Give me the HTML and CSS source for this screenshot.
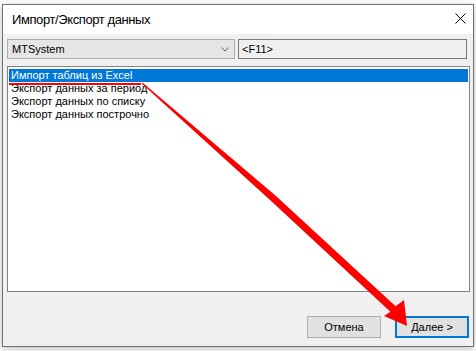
FILE: index.html
```html
<!DOCTYPE html>
<html lang="ru">
<head>
  <meta charset="UTF-8" />
  <title>Импорт/Экспорт данных</title>
  <link rel="stylesheet" href="styles.css">
</head>
<body>

  <div class="dialog">
    <div class="titlebar">
      <span class="title">Импорт/Экспорт данных</span>
      <svg class="close" width="11" height="11" viewBox="0 0 11 11">
        <path d="M0.5 0.5 L10.5 10.5 M10.5 0.5 L0.5 10.5" stroke="#000" stroke-width="1" fill="none" />
      </svg>
    </div>

    <div class="content">
      <div class="top-row">
        <div class="combo">
          <span>MTSystem</span>
          <svg width="8" height="5" viewBox="0 0 8 5">
            <path d="M0.5 0.5 L4 4 L7.5 0.5" stroke="#606060" stroke-width="1" fill="none" />
          </svg>
        </div>
        <div class="hotkey">&lt;F11&gt;</div>
      </div>

      <ul class="listbox">
        <li class="selected">Импорт таблиц из Excel</li>
        <li>Экспорт данных за период</li>
        <li>Экспорт данных по списку</li>
        <li>Экспорт данных построчно</li>
      </ul>

      <div class="buttons">
        <button class="btn">Отмена</button>
        <button class="btn btn-default">Далее &gt;</button>
      </div>
    </div>
  </div>

  <!-- annotation drawn over the screenshot -->
  <svg class="annotation" width="476" height="351" viewBox="0 0 476 351">
    <rect x="9" y="83" width="132" height="2" fill="#ff0000" />
    <polygon fill="#ff0000"
      points="142.4,82.6 275.4,195.4 395.6,306.2 404,300 407,326 384,316 390.4,311.8 270.6,200.6 141.6,83.4" />
  </svg>

</body>
</html>
```

FILE: styles.css
```css
body {
  margin: 0;
  background: #fff;
  font-family: "Liberation Sans", Arial, sans-serif;
  font-size: 11px;
  color: #000;
  position: relative;
  width: 476px;
  height: 351px;
  overflow: hidden;
}

.dialog {
  margin: 4px 0 0 2px;
  width: 470px;
  height: 341px;
  border: 1px solid #707070;
  background: #f0f0f0;
  box-shadow: 0 2px 8px rgba(0,0,0,0.25);
  display: flex;
  flex-direction: column;
}

.titlebar {
  height: 29px;
  background: #fff;
  display: flex;
  align-items: center;
  justify-content: space-between;
  padding: 0 7px 0 9px;
}

.title {
  font-size: 13px;
  letter-spacing: -0.4px;
  line-height: 29px;
}

.close {
  display: block;
  margin-top: -2px;
}

.content {
  flex: 1;
  padding: 5px 3px 8px 4px;
  display: flex;
  flex-direction: column;
}

.top-row {
  display: flex;
  gap: 3px;
  width: 460px;
  height: 20px;
}

.combo {
  box-sizing: border-box;
  width: 228px;
  height: 20px;
  background: #e5e5e5;
  border: 1px solid #adadad;
  display: flex;
  align-items: center;
  justify-content: space-between;
  padding: 0 5px 0 4px;
}

.combo svg {
  display: block;
  margin-top: 1px;
}

.hotkey {
  box-sizing: border-box;
  flex: 1;
  height: 20px;
  background: #f0f0f0;
  border: 1px solid #7a7a7a;
  padding-left: 3px;
  line-height: 18px;
}

.listbox {
  box-sizing: border-box;
  list-style: none;
  margin: 7px 0 0 0;
  width: 463px;
  height: 226px;
  background: #fff;
  border: 1px solid #828282;
  padding: 2px 1px;
}

.listbox li {
  height: 13px;
  line-height: 13px;
  padding-left: 2px;
  white-space: nowrap;
}

.listbox li.selected {
  background: #0078d7;
  color: #fff;
}

.buttons {
  margin-top: 24px;
  display: flex;
  justify-content: flex-end;
  gap: 14px;
  padding-right: 1px;
}

.btn {
  box-sizing: border-box;
  width: 74px;
  height: 22px;
  margin: 0;
  padding: 0;
  background: #e1e1e1;
  border: 1px solid #adadad;
  font-family: "Liberation Sans", Arial, sans-serif;
  font-size: 11px;
  color: #000;
}

.btn-default {
  border: 2px solid #0078d7;
}

.annotation {
  position: absolute;
  top: 0;
  left: 0;
  pointer-events: none;
}
```
